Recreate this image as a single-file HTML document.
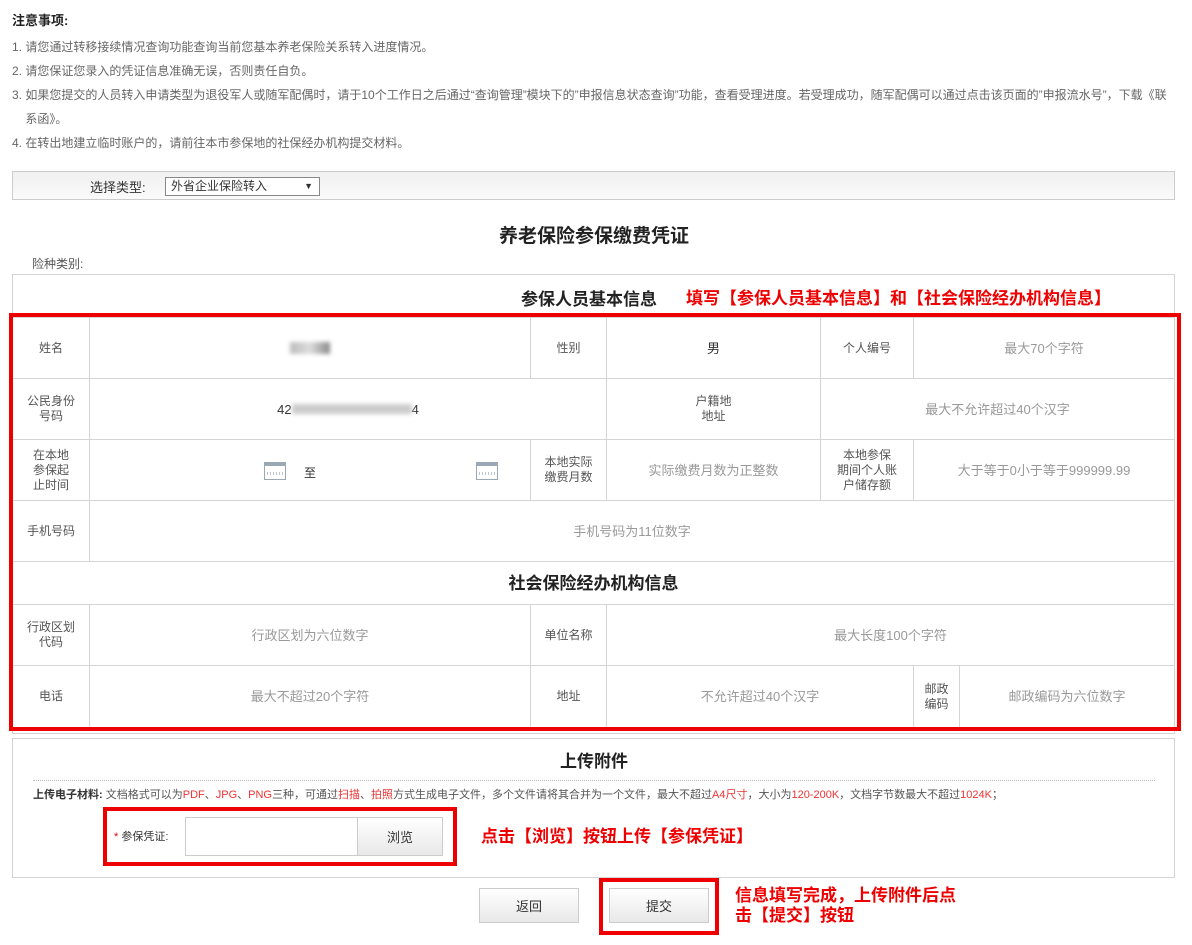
<!DOCTYPE html>
<html><head><meta charset="utf-8">
<style>
*{margin:0;padding:0;box-sizing:border-box}
body{width:1192px;height:945px;background:#fff;position:relative;font-family:"Liberation Sans","Noto Sans CJK SC",sans-serif;color:#666;font-size:12px;overflow:hidden}
.a{position:absolute;white-space:nowrap}
.c{position:absolute;border:1px solid #d4d4d4;display:flex;align-items:center;justify-content:center;text-align:center;line-height:15px}
.lab{color:#555;font-size:12px}
.ph{color:#999;font-size:13px}
.red{color:#e00;font-weight:bold}
.btn{position:absolute;border:1px solid #ccc;background:linear-gradient(#fff,#e8e8e8);display:flex;align-items:center;justify-content:center;color:#333;font-size:13px}
.cal{display:inline-block;width:22px;height:18px;border:1px solid #9aa7b5;border-top:4px solid #9aa7b5;background:repeating-linear-gradient(90deg,#fff 0 2px,#bcc5cf 2px 3px);background-size:100% 3px;background-repeat:repeat-x;background-position:0 6px}
</style></head><body>
<div class="a" style="left:12px;top:10px;font-size:13px;font-weight:bold;color:#222">注意事项:</div>
<div class="a" style="left:12px;top:35px;line-height:24px;font-size:12px;color:#666">
1. 请您通过转移接续情况查询功能查询当前您基本养老保险关系转入进度情况。<br>
2. 请您保证您录入的凭证信息准确无误，否则责任自负。<br>
3. 如果您提交的人员转入申请类型为退役军人或随军配偶时，请于10个工作日之后通过“查询管理”模块下的”申报信息状态查询”功能，查看受理进度。若受理成功，随军配偶可以通过点击该页面的”申报流水号”，下载《联<br>
&nbsp;&nbsp;&nbsp;&nbsp;系函》。<br>
4. 在转出地建立临时账户的，请前往本市参保地的社保经办机构提交材料。</div>

<div class="a" style="left:12px;top:171px;width:1163px;height:29px;border:1px solid #ccc;background:linear-gradient(#f0f0f0,#fafafa)"></div>
<div class="a" style="left:90px;top:177px;font-size:13px;color:#333">选择类型:</div>
<div class="a" style="left:165px;top:177px;width:155px;height:19px;border:1px solid #888;background:#fff;font-size:12px;color:#333;padding-left:5px;line-height:17px">外省企业保险转入<span style="position:absolute;right:6px;font-size:9px">▼</span></div>

<div class="a" style="left:0;width:1188px;top:221px;text-align:center;font-size:19px;font-weight:bold;color:#222">养老保险参保缴费凭证</div>
<div class="a" style="left:32px;top:255px;font-size:12px;color:#555">险种类别:</div>

<div class="a" style="left:12px;top:274px;width:1163px;height:460px;border:1px solid #d4d4d4"></div>
<div class="a" style="left:521px;top:285px;font-size:17px;font-weight:bold;color:#222">参保人员基本信息</div>
<div class="a red" style="left:686px;top:284px;font-size:17px">填写【参保人员基本信息】和【社会保险经办机构信息】</div>

<!-- row1 -->
<div class="c lab" style="left:12px;top:317px;width:78px;height:62px">姓名</div>
<div class="c" style="left:89px;top:317px;width:442px;height:62px"><span style="display:inline-block;width:40px;height:12px;background:linear-gradient(90deg,#bbb,#ddd,#888);filter:blur(2px)"></span></div>
<div class="c lab" style="left:530px;top:317px;width:77px;height:62px">性别</div>
<div class="c" style="left:606px;top:317px;width:215px;height:62px;color:#333;font-size:13px">男</div>
<div class="c lab" style="left:820px;top:317px;width:94px;height:62px">个人编号</div>
<div class="c ph" style="left:913px;top:317px;width:262px;height:62px">最大70个字符</div>
<!-- row2 -->
<div class="c lab" style="left:12px;top:378px;width:78px;height:62px">公民身份<br>号码</div>
<div class="c" style="left:89px;top:378px;width:518px;height:62px;color:#333;font-size:13px">42<span style="display:inline-block;width:120px;height:10px;background:#ccc;filter:blur(2px)"></span>4</div>
<div class="c lab" style="left:606px;top:378px;width:215px;height:62px">户籍地<br>地址</div>
<div class="c ph" style="left:820px;top:378px;width:355px;height:62px">最大不允许超过40个汉字</div>
<!-- row3 -->
<div class="c lab" style="left:12px;top:439px;width:78px;height:62px">在本地<br>参保起<br>止时间</div>
<div class="c" style="left:89px;top:439px;width:442px;height:62px"></div>
<span class="a cal" style="left:264px;top:462px"></span>
<div class="a" style="left:304px;top:464px;color:#333;font-size:12px">至</div>
<span class="a cal" style="left:476px;top:462px"></span>
<div class="c lab" style="left:530px;top:439px;width:77px;height:62px">本地实际<br>缴费月数</div>
<div class="c ph" style="left:606px;top:439px;width:215px;height:62px">实际缴费月数为正整数</div>
<div class="c lab" style="left:820px;top:439px;width:94px;height:62px">本地参保<br>期间个人账<br>户储存额</div>
<div class="c ph" style="left:913px;top:439px;width:262px;height:62px">大于等于0小于等于999999.99</div>
<!-- row4 -->
<div class="c lab" style="left:12px;top:500px;width:78px;height:62px">手机号码</div>
<div class="c ph" style="left:89px;top:500px;width:1086px;height:62px">手机号码为11位数字</div>
<!-- section -->
<div class="c" style="left:12px;top:561px;width:1163px;height:44px;font-size:17px;font-weight:bold;color:#222">社会保险经办机构信息</div>
<!-- row6 -->
<div class="c lab" style="left:12px;top:604px;width:78px;height:62px">行政区划<br>代码</div>
<div class="c ph" style="left:89px;top:604px;width:442px;height:62px">行政区划为六位数字</div>
<div class="c lab" style="left:530px;top:604px;width:77px;height:62px">单位名称</div>
<div class="c ph" style="left:606px;top:604px;width:569px;height:62px">最大长度100个字符</div>
<!-- row7 -->
<div class="c lab" style="left:12px;top:665px;width:78px;height:63px">电话</div>
<div class="c ph" style="left:89px;top:665px;width:442px;height:63px">最大不超过20个字符</div>
<div class="c lab" style="left:530px;top:665px;width:77px;height:63px">地址</div>
<div class="c ph" style="left:606px;top:665px;width:308px;height:63px">不允许超过40个汉字</div>
<div class="c lab" style="left:913px;top:665px;width:47px;height:63px">邮政<br>编码</div>
<div class="c ph" style="left:959px;top:665px;width:216px;height:63px">邮政编码为六位数字</div>

<div class="a" style="left:9px;top:313px;width:1172px;height:418px;border:4px solid #e00"></div>

<!-- upload -->
<div class="a" style="left:12px;top:738px;width:1163px;height:140px;border:1px solid #d4d4d4"></div>
<div class="a" style="left:0;width:1188px;top:747px;text-align:center;font-size:17px;font-weight:bold;color:#222">上传附件</div>
<div class="a" style="left:33px;top:780px;width:1122px;border-top:1px dotted #bbb"></div>
<div class="a" style="left:33px;top:786px;font-size:11px;color:#555"><b style="color:#333">上传电子材料:</b> 文档格式可以为<span style="color:#e33">PDF</span>、<span style="color:#e33">JPG</span>、<span style="color:#e33">PNG</span>三种，可通过<span style="color:#e33">扫描</span>、<span style="color:#e33">拍照</span>方式生成电子文件，多个文件请将其合并为一个文件，最大不超过<span style="color:#e33">A4尺寸</span>，大小为<span style="color:#e33">120-200K</span>，文档字节数最大不超过<span style="color:#e33">1024K</span>；</div>
<div class="a" style="left:103px;top:807px;width:354px;height:59px;border:4px solid #e00"></div>
<div class="a" style="left:114px;top:828px;font-size:11px;color:#333"><span style="color:#e00">*</span> 参保凭证:</div>
<div class="a" style="left:185px;top:817px;width:173px;height:39px;border:1px solid #ccc;background:#fff"></div>
<div class="btn" style="left:357px;top:817px;width:86px;height:39px">浏览</div>
<div class="a red" style="left:481px;top:822px;font-size:17px">点击【浏览】按钮上传【参保凭证】</div>

<div class="btn" style="left:479px;top:888px;width:100px;height:35px">返回</div>
<div class="a" style="left:599px;top:878px;width:120px;height:57px;border:4px solid #e00"></div>
<div class="btn" style="left:609px;top:888px;width:100px;height:35px">提交</div>
<div class="a red" style="left:735px;top:886px;font-size:17px;line-height:20px">信息填写完成，上传附件后点<br>击【提交】按钮</div>
</body></html>
